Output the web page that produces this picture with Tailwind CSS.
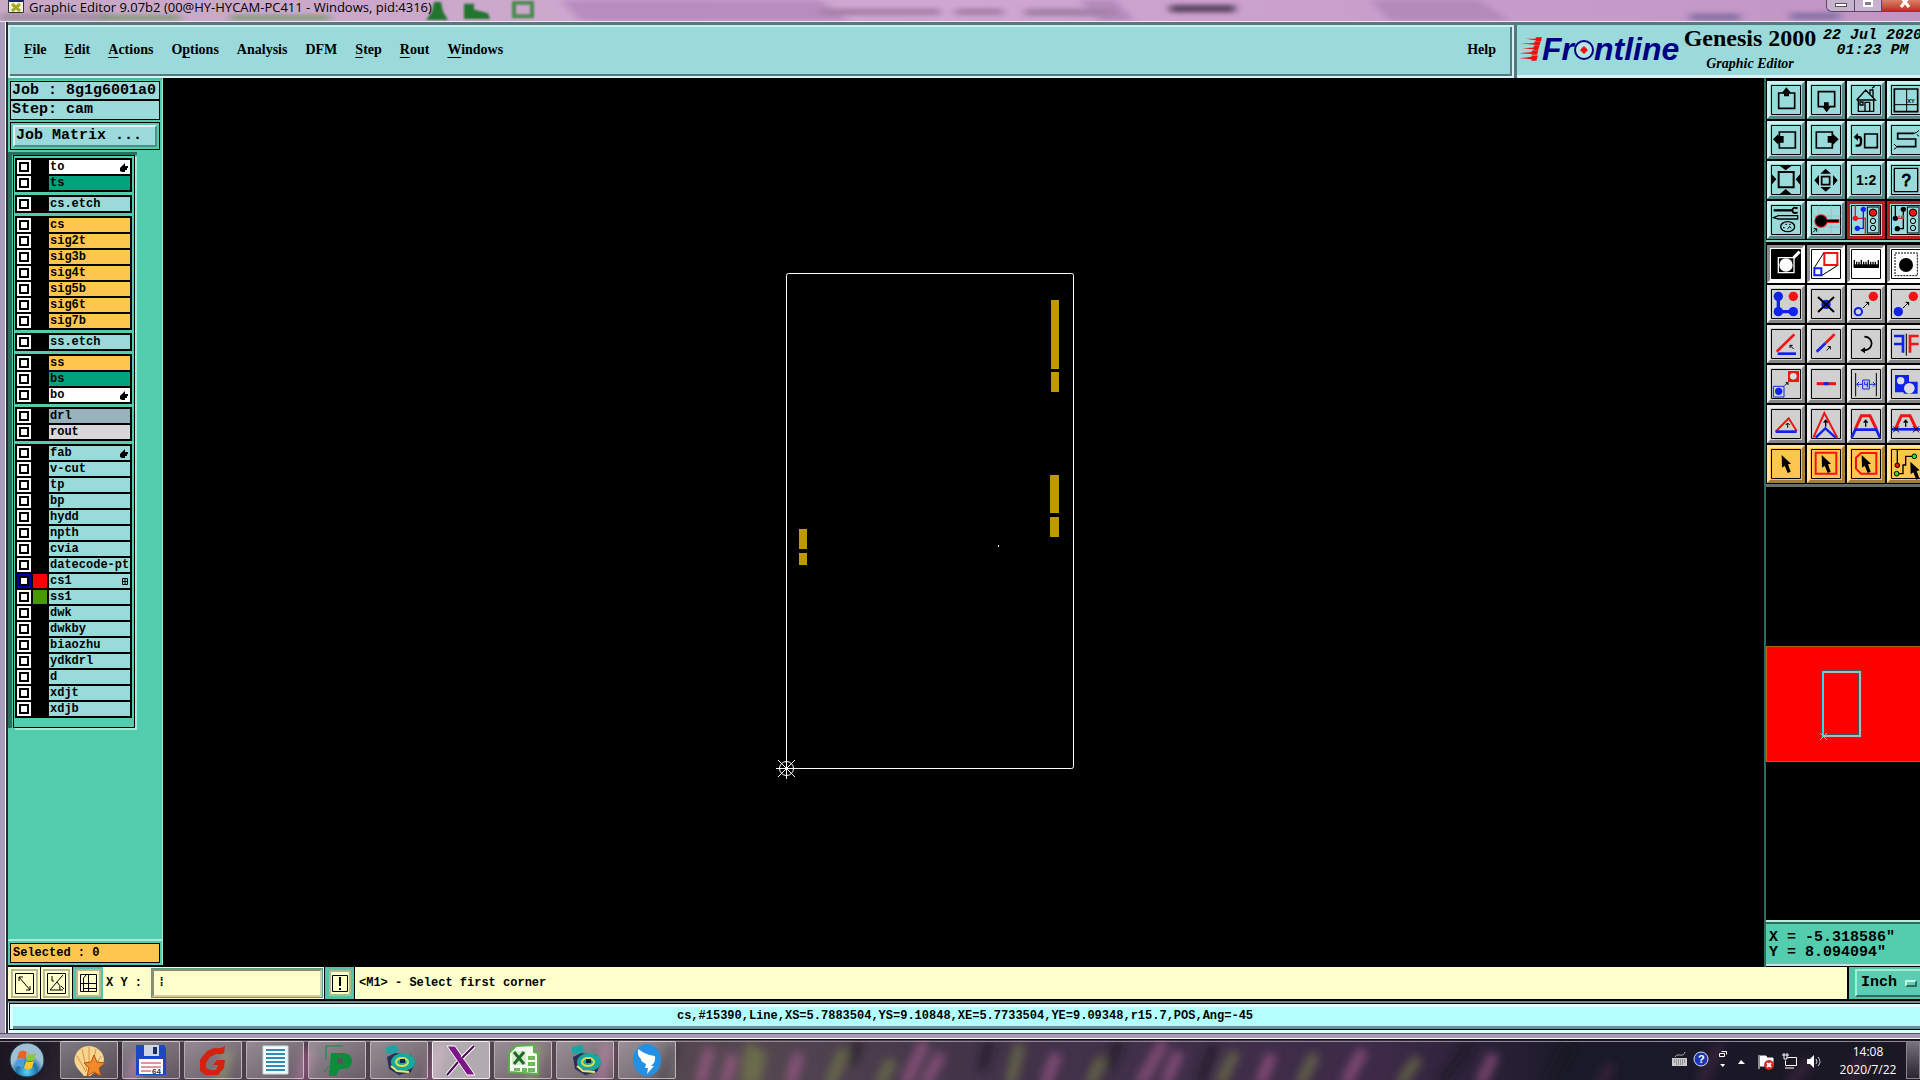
<!DOCTYPE html>
<html lang="en">
<head>
    <meta charset="UTF-8">
    <meta name="viewport" content="width=device-width, initial-scale=1.0">
    <title>Graphic Editor</title>
    <script src="https://cdn.jsdelivr.net/npm/@tailwindcss/browser@4"></script>
</head>
<body class="h-screen flex flex-col overflow-hidden bg-[#a79cba] text-black font-['Liberation_Mono',monospace]">

    <!-- Title bar -->
    <header class="relative h-[22px] shrink-0 overflow-hidden flex items-start justify-between bg-linear-to-r from-[#c9a9c6] via-[#cfa6d2] to-[#c194c4] border-b border-[#f0e4f2]">
        <svg class="absolute inset-0 w-full h-full" preserveAspectRatio="none" viewBox="0 0 1920 22" aria-hidden="true">
            <defs><filter id="soft"><feGaussianBlur stdDeviation="4 2"/></filter><filter id="softer"><feGaussianBlur stdDeviation="1"/></filter></defs>
            <g filter="url(#soft)">
                <path d="M0 14H110V22H0z" fill="#a38fa3"/>
                <path d="M560 0H820L850 22H580z" fill="#b98cc0"/>
                <path d="M1080 0H1115L1135 22H1100zM1370 0H1480L1510 22H1390z" fill="#b48abb"/>
                <path d="M820 9h120v7H820zM955 9h48v7h-48zM1025 9h90v8h-90z" fill="#a681a8"/>
                <path d="M1170 5h65v8h-65z" fill="#5f4665"/>
                <path d="M1690 14h50v8h-50zM1790 13h50v8h-50z" fill="#8a74a8"/>
                <path d="M100 16h80v5h-80zM230 16h100v5h-100z" fill="#7c9a76"/>
            </g>
            <g fill="#23752d" filter="url(#softer)">
                <path d="M434 2h7l2 10 5 9h-22l6-9z"/>
                <path d="M464 4h10v6l14 4 2 6h-26z"/>
                <path d="M514 3h18v14h-18z" fill="none" stroke="#4b8a50" stroke-width="4"/>
            </g>
        </svg>
        <div class="relative flex items-center h-[14px] pl-2 gap-[5px]">
            <svg class="w-4 h-4" viewBox="0 0 16 16" aria-hidden="true"><path d="M0 0h16v14H0z" fill="#f2f2e0"/><path d="M0 0h16v3H0z" fill="#14245c"/><path d="M4 5l8 7M12 5l-8 7" stroke="#a2ab22" stroke-width="3"/><path d="M.5 0v13.500h15V0" fill="none" stroke="#333"/></svg>
            <h1 class="text-[13px] leading-[16px] font-['Open_Sans','Noto_Sans',sans-serif]">Graphic Editor 9.07b2 (00@HY-HYCAM-PC411 - Windows, pid:4316)</h1>
        </div>
        <div class="relative flex h-[12px] w-[94px] shrink-0 border-l border-b border-[#594766] rounded-bl-md overflow-hidden">
            <button aria-label="Minimize" class="w-[28px] shrink-0 border-r border-[#594766] bg-[#c7b3cf] flex justify-center items-start pt-[3px]"><span class="w-3 h-1 bg-white border border-[#555]"></span></button>
            <button aria-label="Restore" class="w-[27px] shrink-0 border-r border-[#594766] bg-[#c7b3cf] flex justify-center items-start"><span class="w-[10px] h-[7px] bg-[#8c7a96] border-2 border-white"></span></button>
            <button aria-label="Close" class="w-[46px] shrink-0 bg-linear-to-b from-[#d97f6c] to-[#bb2d16] flex justify-center"><svg class="w-3 h-2" viewBox="0 0 12 8"><path d="M2-3l8 10M10-3L2 7" stroke="#fff" stroke-width="3"/></svg></button>
        </div>
    </header>

    <!-- Application window -->
    <div class="flex-1 min-h-0 flex flex-col ml-[5px] pl-[2px] border-l border-white bg-[#2a2a35]">

        <div class="h-[56px] shrink-0 flex bg-[#9bdada]">
            <nav class="flex-1 flex items-center gap-[18px] pl-[12px] pr-[18px] pb-[3px] border-t-[3px] border-[#55797d] text-[14px] leading-4 font-bold font-['Liberation_Serif',serif] shadow-[inset_2px_2px_0_#cdeeee,inset_-2px_-2px_0_#d6f2f2,inset_-4px_-4px_0_#55797d]">
                <a href="#" class="ml-1"><u class="underline-offset-3">F</u>ile</a>
                <a href="#"><u class="underline-offset-3">E</u>dit</a>
                <a href="#"><u class="underline-offset-3">A</u>ctions</a>
                <a href="#">O<u class="underline-offset-3">p</u>tions</a>
                <a href="#">Analysis</a>
                <a href="#">DFM</a>
                <a href="#"><u class="underline-offset-3">S</u>tep</a>
                <a href="#"><u class="underline-offset-3">R</u>out</a>
                <a href="#"><u class="underline-offset-3">W</u>indows</a>
                <a href="#" class="ml-auto">Help</a>
            </nav>
            <div class="w-[406px] shrink-0 flex overflow-hidden border-t-[3px] border-l-[3px] border-[#55797d] shadow-[inset_0_-3px_0_#d6f2f2]">
                <div class="flex items-center h-[48px] w-[165px] shrink-0 pl-[2px] text-[#000082] text-[32px] leading-8 font-bold italic font-['Liberation_Sans',sans-serif]">
                    <svg class="w-[23px] h-[24px] shrink-0" viewBox="0 0 66 69" aria-hidden="true"><path d="M18 5L48 5V1H66L63 12H48V9zM6 19L44 17V13H62L59 25H44V22zM9 33L42 30V26H58L55 38H42V35zM1 47L37 43V39H55L52 51H37V49zM1 61L36 57V53H54L50 68H36V64z" fill="#f00d0d"/></svg>
                    <span>Fr</span><svg class="w-5 h-6 shrink-0" viewBox="0 0 20 24" aria-hidden="true"><circle cx="10" cy="13" r="9" fill="#b5e4e6" stroke="#000082" stroke-width="2"/><path d="M10 9l4 4-4 4-4-4z" fill="#f00d0d"/></svg><span>ntline</span>
                </div>
                <div class="w-[136px] shrink-0 flex flex-col items-center pt-px font-bold font-['Liberation_Serif',serif] whitespace-nowrap">
                    <span class="text-[24px] leading-[24px]">Genesis 2000</span>
                    <span class="text-[14px] leading-4 italic pt-[6px] pb-px">Graphic Editor</span>
                </div>
                <div class="shrink-0 w-[105px] pl-1 pt-[3px] text-[15px] leading-[15px] font-bold italic whitespace-pre text-center">22 Jul 2020
01:23 PM</div>
            </div>
        </div>

        <div class="flex-1 min-h-0 flex bg-black">
            <!-- Layers -->
            <aside class="w-[155px] mb-[2px] shrink-0 flex flex-col bg-[#53cdad] border-r border-[#a5ecd8] border-t-[2px] border-t-[#55b59c]">
                <div class="mx-[2px] mt-px border border-black bg-[#9bdada] text-[15px] font-bold leading-[18px] whitespace-nowrap">
                    <p class="h-[19px] border-b-2 border-black pl-px">Job : 8g1g6001a0</p>
                    <p class="h-[18px] pl-px">Step: cam</p>
                </div>
                <div class="mx-[2px] mt-[2px] border border-black p-[2px]">
                    <button class="block w-full h-[22px] px-[1px] text-left text-[15px] leading-4 font-bold bg-[#9bdada] border-2 border-t-[#d9f7f4] border-l-[#d9f7f4] border-r-[#4c8f8c] border-b-[#4c8f8c]">Job Matrix ...</button>
                </div>
                <div class="mt-[2px] w-[129px] border-t-[3px] border-l-[4px] border-[#2b6e5d]">
                    <div id="layers" class="flex flex-col gap-[3px] border border-black shadow-[2px_2px_0_#a5ecd8] pt-[2px] pl-px pr-[2px] pb-[9px] ml-[1px] mr-[2px]"></div>
                </div>
                <p class="mt-auto border-t-2 border-[#a5ecd8] p-[2px] text-[12px] leading-[18px] font-bold"><span class="block h-5 border border-black bg-[#ffc64f] pl-[2px]">Selected : 0</span></p>
            </aside>

            <!-- Drawing area -->
            <main class="flex-1 min-w-0">
                <svg class="block w-full h-full" viewBox="163 78 1601 889" role="img" aria-label="Board outline">
                    <rect x="786.500" y="273.500" width="287" height="495" rx="2" fill="none" stroke="#fff"/>
                    <path d="M1051 300h8v69h-8zM1051 372h8v20h-8zM1050 475h9v38h-9zM1050 517h9v20h-9zM799 529h8v20h-8zM799 553h8v12h-8z" fill="#bf9900"/>
                    <path d="M998 545h1v2h-1z" fill="#fff"/>
                    <path d="M776 768.500h20M786.500 758v21M778 760l17 17M795 760l-17 17" stroke="#fff"/>
                    <circle cx="786.500" cy="768.500" r="7" fill="none" stroke="#fff"/>
                </svg>
            </main>

            <!-- Tools, overview and coordinates -->
            <aside class="w-[156px] shrink-0 flex flex-col overflow-hidden border-l-2 border-[#2f6b5e]">
                <div id="view-tools" class="grid grid-cols-[repeat(4,38px)] gap-[2px] pl-px pt-px mt-[2px] pb-[1px] border-b-2 border-[#8fd0c4]"></div>
                <div id="edit-tools" class="grid grid-cols-[repeat(4,38px)] gap-[2px] pl-px pt-[3px] pb-[1px] border-b-3 border-[#66706e]"></div>
                <div class="flex-1 min-h-0 flex flex-col justify-center">
                    <svg class="block h-[116px] w-[154px]" viewBox="0 0 154 116" role="img" aria-label="Overview">
                        <path d="M0 0h154v116H0z" fill="#fe0000"/>
                        <path d="M154 .5H.5v115H154" fill="none" stroke="#b06a10"/>
                        <path d="M57 26h37v64H57" fill="none" stroke="#3c5a5c" stroke-width="4"/>
                        <path d="M57 26h37v64H57" fill="none" stroke="#b5b5b5" stroke-width="2"/>
                        <path d="M57 25v66" stroke="#2de0e0" stroke-width="2"/>
                        <path d="M54 87l7 7M61 87l-7 7" stroke="#8cc"/>
                    </svg>
                </div>
                <div class="h-[46px] mb-px shrink-0 -ml-px bg-[#53cdad] border-t-2 border-b-2 border-[#b5ecdc] pl-[4px] text-[15px] leading-[15px] font-bold whitespace-pre pt-[8px] shadow-[inset_0_2px_0_#2b6e5d]">X = -5.318586"
Y = 8.094094"</div>
            </aside>
        </div>

        <!-- Command line -->
        <div class="h-[34px] shrink-0 flex bg-[#ffffcc] border-b-2 border-black text-[12px] font-bold">
            <button aria-label="Line mode" class="w-[33px] shrink-0 flex items-center justify-center border-r border-black">
                <svg class="w-[27px] h-[29px]" viewBox="0 0 27 29" fill="none" stroke="#000"><path d="M1 1h25v27H1z" stroke="#b8b890" stroke-width="2"/><path d="M4.500 4.500h18v20h-18z"/><path d="M8 8l11 13M8 12V8h4M19 17v4h-4"/></svg>
            </button>
            <button aria-label="Angle mode" class="w-[32px] shrink-0 flex items-center justify-center border-r border-black">
                <svg class="w-[27px] h-[29px]" viewBox="0 0 27 29" fill="none" stroke="#000"><path d="M1 1h25v27H1z" stroke="#b8b890" stroke-width="2"/><path d="M4.500 4.500h18v20h-18z"/><path d="M20 6L7 21h13M9 7v5h2M14 13q4 3 3 8M18 17l3 3"/></svg>
            </button>
            <button aria-label="Grid snap" class="w-[30px] shrink-0 flex items-center justify-center bg-[#53c4a6]">
                <svg class="w-[25px] h-[28px]" viewBox="0 0 25 28" fill="none" stroke="#000"><path d="M1 1h23v26H1z" fill="#ffffcc" stroke="#b8b890" stroke-width="2"/><path d="M4.500 5.500h16v17h-16zM12.500 5v17M4 14.500h16M7.500 22v-13l3-3.500M7 19.500h13"/></svg>
            </button>
            <label for="xy" class="w-[49px] shrink-0 pl-[3px] leading-[33px] whitespace-pre">X Y :</label>
            <input id="xy" type="text" class="w-[170px] shrink-0 my-[2px] px-1 bg-[#ffffcc] border-2 border-[#8e8e70] border-r-[#cfcfa5] border-b-[#cfcfa5] outline outline-[#4f9f88] placeholder:text-black" placeholder="⁞">
            <button aria-label="Alert" class="ml-[2px] w-[31px] shrink-0 flex items-center justify-center bg-[#53c4a6] border-x border-black">
                <svg class="w-[22px] h-[26px]" viewBox="0 0 22 26"><path d="M1 1h20v24H1z" fill="#ffffcc" stroke="#b8b890" stroke-width="2"/><path d="M3.500 5.500h15v16h-15z" fill="none" stroke="#000"/><path d="M10 7h2v9h-2zM10 18h2v2h-2z"/></svg>
            </button>
            <p class="flex-1 pl-1 leading-[33px] whitespace-pre">&lt;M1&gt; - Select first corner</p>
            <div class="w-[73px] shrink-0 border-l-2 border-black bg-[#53c4a6] pl-[6px] py-[2px] overflow-hidden">
                <button class="w-[80px] h-[28px] flex items-center gap-2 pl-[4px] bg-[#5ccdb2] border-2 border-t-[#a5ecd8] border-l-[#a5ecd8] border-b-[#2b6e5d] text-[15px] leading-4">Inch<span class="w-3 h-[7px] border-2 border-t-[#c5f5e8] border-l-[#c5f5e8] border-r-[#2b6e5d] border-b-[#2b6e5d]"></span></button>
            </div>
        </div>

        <!-- Status -->
        <div class="h-[32px] shrink-0 bg-[#dffcfc] border-t-2 border-[#6f8f8f] pb-[3px] pl-px">
            <p class="h-[27px] border border-r-0 border-black bg-[#b3ffff] text-center text-[12px] leading-[25px] font-bold shadow-[inset_0_3px_0_#dcffff,inset_3px_0_0_#dcffff,inset_0_-3px_0_#5d9797]">cs,#15390,Line,XS=5.7883504,YS=9.10848,XE=5.7733504,YE=9.09348,r15.7,POS,Ang=-45</p>
        </div>
    </div>
    <div class="h-[6px] shrink-0 border-t border-[#555] border-b border-b-white bg-[#a79cba]"></div>

    <!-- Taskbar -->
    <footer class="relative h-[41px] shrink-0 flex items-center bg-[#1b1822] border-t border-[#100c16]">
        <svg class="absolute inset-0 w-full h-full" preserveAspectRatio="none" viewBox="0 0 1920 40" aria-hidden="true">
            <defs>
                <filter id="haze"><feGaussianBlur stdDeviation="5"/></filter>
                <linearGradient id="ground"><stop offset="0" stop-color="#1c1620"/><stop offset=".1" stop-color="#4c3d4b"/><stop offset=".3" stop-color="#55464f"/><stop offset=".4" stop-color="#534650"/><stop offset=".5" stop-color="#43344a"/><stop offset=".72" stop-color="#3d2a48"/><stop offset=".82" stop-color="#1a1a29"/><stop offset="1" stop-color="#1b1724"/></linearGradient>
            </defs>
            <path d="M0 0h1920v40H0z" fill="url(#ground)"/>
            <g filter="url(#haze)" stroke-width="11" opacity=".55">
                <path d="M130 44l10-30M300 44l9-34M430 44l10-40M600 44l8-40M700 44l10-36M725 44l8-30M790 44l9-30M905 44l20-42M925 44l16-30M1045 44l12-30M1140 44l24-42M1165 44l14-32M1260 44l12-30M1345 44l18-34M1480 44l14-30" stroke="#b8649c"/>
                <path d="M220 44l8-34M530 44l8-40M745 44l6-40M755 44l6-34M830 44l14-34M880 44l12-24M1010 44l10-40M1090 44l12-26M1220 44l15-32M1300 44l15-30M1400 44l18-26" stroke="#7e8b48"/>
                <path d="M20 44l30-40M660 44l12-40M860 0l-10 24M990 0l-8 30M1120 0l-12 30M1200 44l14-40M1440 44l30-40M1550 44l20-40" stroke="#15121e"/>
                <path d="M1600 44l12-20M1700 44l20-40M1790 44l20-24M1850 44l14-30" stroke="#4a2948"/>
            </g>
            <path d="M0 1.500h1920" stroke="#8e8794"/>
        </svg>
        <button aria-label="Start" class="relative w-9 h-9 ml-[9px] mr-[15px] shrink-0">
            <svg viewBox="0 0 36 36"><defs><radialGradient id="orb" cy=".85"><stop offset="0" stop-color="#5fd4f5"/><stop offset=".6" stop-color="#1d6fa5"/><stop offset="1" stop-color="#9ec0d2"/></radialGradient></defs><circle cx="18" cy="18" r="17" fill="url(#orb)" stroke="#16384f"/><path d="M10 10q4-3 8 0l-2 7q-4-2-8 0z" fill="#e8622a"/><path d="M19 11q4 3 8 0l-2 7q-4 2-8 0z" fill="#8fc640"/><path d="M8 18q4-2 8 0l-2 8q-4-3-8-1z" fill="#4f9be0"/><path d="M17 19q4 2 8 0l-2 7q-4 3-8 0z" fill="#fbc52c"/></svg>
        </button>
        <div id="tasks" class="relative flex gap-1 h-[38px]"></div>
        <div class="relative ml-auto flex items-center h-full text-white">
            <svg class="w-[155px] h-5 mr-3" viewBox="0 0 155 20" aria-label="Notification area">
                <path d="M1 8h15v8H1z" fill="#ccc"/><path d="M3 10h11M3 12h11M5 14h7" stroke="#555" stroke-dasharray="1 1"/><path d="M4 7q1-3 5-2t5-3" fill="none" stroke="#aaa"/>
                <circle cx="30" cy="9" r="7" fill="#1c35b5" stroke="#dde" stroke-width="1"/><text x="27" y="13" font-family="Liberation Sans" font-weight="bold" font-size="11" fill="#fff">?</text>
                <path d="M50.500 1.500h5v3M48.500 3.500h5v3h-5z" fill="none" stroke="#fff"/><path d="M49 14h5l-2 3zM67 14h7l-4-4z" fill="#fff"/>
                <path d="M88 5v14M89 6h6l1 2h6v8H89" fill="#fff" stroke="#fff"/><circle cx="98" cy="15" r="5" fill="#d62b1f"/><path d="M96 13l4 4M100 13l-4 4" stroke="#fff" stroke-width="2"/>
                <path d="M116.500 7.500h9v8h-11v-5M111 5h7M113 3v6h3V3M114 18h9" fill="none" stroke="#fff" stroke-width="1"/>
                <path d="M136 9h3l4-4v13l-4-4h-3z" fill="#fff"/><path d="M145 9q2 3 0 5M147 7q4 5 0 9" fill="none" stroke="#ccc"/>
            </svg>
            <div class="w-[60px] mr-[8px] pt-[2px] text-center text-[12px] leading-[18px] font-['Open_Sans','Noto_Sans',sans-serif]"><p>14:08</p><p>2020/7/22</p></div>
            <button aria-label="Show desktop" class="w-[14px] h-[38px] border border-[#8b8390] bg-linear-to-b from-[#77727c] to-[#2a2530]"></button>
        </div>
    </footer>

    <script>
        const cyan = 'bg-[#9bdada]', orange = 'bg-[#ffc64f]', green = 'bg-[#00a37b]', white = 'bg-white';
        const groups = [
            [['to', white, 'hand'], ['ts', green]],
            [['cs.etch', cyan]],
            [['cs', orange], ['sig2t', orange], ['sig3b', orange], ['sig4t', orange], ['sig5b', orange], ['sig6t', orange], ['sig7b', orange]],
            [['ss.etch', cyan]],
            [['ss', orange], ['bs', green], ['bo', white, 'hand']],
            [['drl', 'bg-[#97b2bd]'], ['rout', 'bg-[#d9d7d9]']],
            [['fab', cyan, 'hand'], ['v-cut', cyan], ['tp', cyan], ['bp', cyan], ['hydd', cyan], ['npth', cyan], ['cvia', cyan],
             ['datecode-ptc', cyan], ['cs1', cyan, 'grid', 'bg-[#fe0000]'], ['ss1', cyan, '', 'bg-[#469b00]'], ['dwk', cyan], ['dwkby', cyan],
             ['biaozhu', cyan], ['ydkdrl', cyan], ['d', cyan], ['xdjt', cyan], ['xdjb', cyan]],
        ];
        const marks = {
            hand: '<svg class="w-2 h-[9px] shrink-0" viewBox="0 0 8 9"><path d="M0 5l2-2 3-3v3h3v2H7v2H5v2H2L0 8z"/></svg>',
            grid: '<svg class="w-[6px] h-[7px] shrink-0" viewBox="0 0 6 7"><path d="M.5.5h5v6h-5zM3 0v7M0 3.500h6" fill="none" stroke="#000"/></svg>',
        };
        document.getElementById('layers').innerHTML = groups.map(rows => `
            <div class="flex flex-col gap-[2px] bg-black p-[2px]">${rows.map(([name, color, mark, swatch]) => `
                <label class="flex h-[14px] gap-[2px]">
                    <input type="checkbox" aria-label="${name}" class="appearance-none w-[14px] h-[14px] shrink-0 bg-white border-2 ${name === 'cs1' ? 'border-[#0000a8]' : 'border-white'} outline-2 outline-black -outline-offset-4">
                    <span class="w-[14px] shrink-0 ${swatch || ''}"></span>
                    <span class="flex-1 min-w-0 overflow-hidden flex items-center justify-between pl-px pr-[2px] text-[12px] leading-[14px] font-bold whitespace-nowrap ${color}">${name}${marks[mark] || ''}</span>
                </label>`).join('')}
            </div>`).join('');

        // Tool glyphs, three units to the pixel
        const red = '#f21313', blue = '#1022ee';
        const dot = (x, y, c, r = 14) => `<circle cx="${x}" cy="${y}" r="${r}" fill="${c}" stroke="none"/>`;
        const line = (d, c, w = 3) => `<path d="${d}" stroke="${c}" stroke-width="${w}"/>`;
        const solid = (d, c = '#000') => `<path d="${d}" fill="${c}" stroke="none"/>`;
        const lamp = '<rect x="61" y="18" width="35" height="78"/><circle cx="78" cy="35" r="11" fill="#f21313"/><circle cx="78" cy="60" r="8"/><circle cx="78" cy="81" r="8"/>';
        const arrow = 'M44 30L72 56 63 58 71 80 62 84 53 62 45 68Z';
        const viewTools = [
            ['Pan up', line('M35 36h48v46H35z', '#000', 5) + solid('M58 19L73 37H66V46H51V37H44Z')],
            ['Pan down', line('M34 32h49v45H34z', '#000', 5) + solid('M51 64h14v11h8L59 94 45 75h6z')],
            ['Home', line('M29 57L56 27 85 57H29M34 57V91H80V57M54 91V64h14V91M39 63h9v9h-9zM69 40V27h9v22M75 22l8-6', '#000', 4)],
            ['Zoom to XY', line('M22 24h70v68H22z', '#000', 5) + line('M59 24v68M22 71h70', '#000') + '<text x="61" y="67" font-size="17" font-weight="bold" fill="#000" stroke="none">XY</text>'],
            ['Pan left', line('M37 33h48v48H37z', '#000', 5) + solid('M18 55L34 39V45H50V65H34V71Z')],
            ['Pan right', line('M28 33h48v48H28z', '#000', 5) + solid('M62 45H78V39L95 55 78 71V65H62Z')],
            ['Previous view', line('M53 39h38v41H53z', '#000', 5) + line('M26 74H34Q42 74 42 64V56Q42 48 34 48H28', '#000', 7) + solid('M20 48L33 36V60Z')],
            ['Snake', line('M81 37H32V54H86V77H29', '#000', 5) + line('M81 37l8-3 7-6M89 40l7 6M29 77l-8-8M29 79l-8 6', '#000')],
            ['Zoom in', line('M35 33h45v46H35z', '#000', 6) + solid('M38 14H74L56 28ZM38 100H74L56 84ZM13 38L28 55 13 72ZM100 38L86 55 100 72Z')],
            ['Zoom out', line('M44 47h24v24H44z', '#000', 5) + solid('M56 23L72 38H40ZM56 92L72 78H40ZM22 58L36 42V74ZM92 58L78 42V74Z')],
            ['Scale 1:2', '<text x="27" y="73" font-size="42" font-weight="bold" fill="#000" stroke="none">1:2</text>'],
            ['Query', line('M22 22h70v70H22z', '#000', 4) + '<text x="44" y="76" font-size="48" fill="#000">?</text>'],
            ['Setup', line('M20 28H76', '#000', 7) + line('M92 22Q78 16 76 28Q78 40 92 34', '#000', 6) + line('M20 50L34 44H92V54H34Z', '#000', 4) + '<ellipse cx="62" cy="77" rx="21" ry="15" stroke-width="4"/>' + line('M48 80h5M55 70h5M66 70h5M62 84l6-8 5 6', '#000')],
            ['Snap', line('M35 12v88M72 12v88M13 45h88M13 78h88', '#b5a9b4', 2) + dot(42, 60, red, 20) + line('M50 60H97', red, 12) + dot(42, 60, '#000', 17) + line('M50 60H95', '#000', 6) + line('M18 94l10-10M20 83h9v9', '#000')],
            ['Net on', line('M25 12v40h30v48', red, 4) + line('M49 25V82H31', blue, 4) + dot(25, 52, red, 8) + dot(49, 25, blue, 8) + dot(31, 82, blue, 8) + lamp],
            ['Net off', line('M25 12v40M49 25V83H31', '#000', 4) + line('M33 52h18M36 44v8M43 44v8M50 42v12', red) + dot(25, 52, '#000', 8) + dot(49, 25, '#000', 8) + dot(31, 83, '#000', 8) + lamp],
        ];
        const trap = 'M25 72L43 32H69L88 72';
        const up = line('M56 65V47M50 53l6-7 6 7', '#000', 4);
        const editTools = [
            ['Negative', solid('M14 14h88v86H14z') + line('M34 38h47v45H34z', '#fff', 4) + dot(57, 60, '#fff', 20) + line('M80 38L98 20', '#fff', 9)],
            ['Resize', line('M52 24h39v36H52z', red, 6) + line('M22 70h21v21H22z', blue, 6) + line('M22 68L50 24M45 91L91 62', '#000', 3)],
            ['Measure', solid('M20 58H96V69H20Z') + line('M22 45v20M29 50v12M36 50v12M43 45v20M50 50v12M57 50v12M64 45v20M71 50v12M78 50v12M85 50v12M94 45v20', '#000', 4)],
            ['Select area', '<path d="M24 24h67v68H24z" stroke-dasharray="6 3"/>' + dot(57, 60, '#000', 21)],
            ['Copy', line('M34 34V80H79', blue, 10) + dot(34, 34, blue) + dot(34, 80, blue) + dot(79, 80, blue) + dot(79, 34, red)],
            ['Delete', dot(57, 58, blue) + line('M33 36L81 81M81 36L33 81', '#000', 6)],
            ['Copy to', dot(79, 34, red) + '<circle cx="34" cy="80" r="11" stroke="#1022ee" stroke-width="6"/>' + line('M48 69L65 52M56 52h9v9', '#000')],
            ['Move to', dot(79, 34, red) + dot(34, 80, blue) + line('M48 69L65 52M56 52h9v9', '#000')],
            ['Rotate', line('M29 80L82 28', red, 8) + line('M32 86H87', blue, 8) + line('M80 72L69 61M69 69v-8h8', '#000')],
            ['Stretch', line('M55 55L83 28', red, 8) + line('M29 80L55 55', blue, 8) + line('M59 76L70 65M62 65h8v8', '#000')],
            ['Undo', line('M52 35Q72 36 74 55Q72 76 48 76', '#000', 5) + solid('M40 76L54 67V85Z')],
            ['Mirror', line('M21 33H48V83M21 57H48', blue, 8) + line('M95 33H69V83M95 57H69', red, 8) + line('M58 26V92', '#000')],
            ['Change symbol', solid('M63 18h33v33H63z', red) + dot(79, 34, '#ddd', 10) + line('M19 64h32v32H19z', blue) + dot(35, 79, blue, 11) + line('M53 62L62 53M56 53h7v7', '#000')],
            ['Break', line('M29 56H87', red, 9) + line('M50 56H65', blue, 9)],
            ['Spacing', line('M26 24V94M88 24V94', '#000') + line('M29 58H47M67 58H85M36 51l-7 7 7 7M78 51l7 7-7 7M47 45h20v27H47zM53 50v9h8M61 50v17', blue)],
            ['Merge', solid('M24 30H66V50H92V86H50V82H24z', blue) + dot(41, 47, '#ddd', 11) + dot(67, 70, '#ddd', 16)],
            ['Triangle', line('M26 80L65 40 89 78', red, 6) + line('M26 80H89', blue, 8) + line('M62 68V55M56 60l6-6 6 6', '#000')],
            ['Peak', line('M19 98L52 24 91 98', red, 6) + line('M26 98L55 70 86 98', blue, 7) + up],
            ['Plateau', line(trap, red, 9) + line('M14 98L25 74H88L99 98', blue, 8) + up],
            ['Plateau cut', line(trap, red, 9) + line('M14 73H100', blue, 8) + line('M18 64l18 18M36 64L18 82M78 64l18 18M96 64L78 82', '#000') + up],
            ['Select', solid(arrow)],
            ['Select in box', line('M26 23h62v63H26z', red, 6) + solid(arrow)],
            ['Select in polygon', line('M42 24H88V86H42L27 71V38Z', red, 6) + solid(arrow)],
            ['Select net', line('M31 14v44M82 34H56V60H48V86H29', '#000', 4) + '<circle cx="31" cy="61" r="7" fill="#f21313"/><circle cx="82" cy="34" r="7" fill="#2fe02f"/><circle cx="29" cy="86" r="7" fill="#2fe02f"/>' + '<g transform="translate(26 20)">' + solid(arrow) + '</g>'],
        ];
        const skins = {
            cyan: 'bg-[#9bdada] border-t-[#cdf2f0] border-l-[#cdf2f0] border-r-[#5b8788] border-b-[#5b8788]',
            alert: 'bg-[#9bdada] border-[#b51f1f]',
            white: 'bg-white border-t-[#8d8d8d] border-l-[#8d8d8d] border-r-white border-b-white',
            gray: 'bg-[#d0d0d0] border-t-[#ececec] border-l-[#ececec] border-r-[#858585] border-b-[#858585]',
            orange: 'bg-[#ffc64f] border-t-[#ffe3a3] border-l-[#ffe3a3] border-r-[#a57f33] border-b-[#a57f33]',
        };
        const tool = ([name, art], skin) => `<button aria-label="${name}" class="w-[38px] h-[38px] border-3 ${skins[skin]}"><svg class="block w-8 h-8" viewBox="9 9 96 96" fill="none" stroke="#000" stroke-width="3" font-family="Liberation Sans"><path d="M13.500 13.500h87v87h-87z"/>${art}</svg></button>`;
        document.getElementById('view-tools').innerHTML = viewTools.map((t, i) => tool(t, i > 13 ? 'alert' : 'cyan')).join('');
        document.getElementById('edit-tools').innerHTML = editTools.map((t, i) => tool(t, i < 4 ? 'white' : i > 19 ? 'orange' : 'gray')).join('');

        const disc = '<path d="M3 3l10-2 3 6-6 3-7-1z" fill="#1aa6a4"/><path d="M4 13l8-4 16 2 4 8-4 9-12 3-10-6z" fill="#2b2f55"/><ellipse cx="20" cy="18" rx="12" ry="9" fill="#19a89e"/><ellipse cx="19" cy="18" rx="6" ry="4" fill="none" stroke="#d9df4a" stroke-width="2"/><path d="M17 15h5v4h-5z" fill="#124"/><path d="M8 22l6 5 12 1" fill="none" stroke="#e6e870" stroke-width="2"/>';
        const tasks = [
            ['Shell', '<path d="M16 2q8 0 13 7 4 7 0 12l-8 8-4 3h-6l-6-7Q-1 17 3 10 7 2 16 2z" fill="#f7d590"/><path d="M16 3v24M9 5l5 22M23 5l-5 22M4 12l9 16M28 12l-9 16" stroke="#d5963c"/><path d="M21 11l3 7 8 1-6 5 2 8-7-4-7 4 2-8-5-5 7-1z" fill="#f28a2c" stroke="#b4540d"/>'],
            ['Floppy', '<path d="M1 1h28l2 3v27H1z" fill="#1d46c4"/><path d="M9 1h15v11H9z" fill="#cfd6e4"/><path d="M18 3h4v7h-4z" fill="#1a2b66"/><path d="M4 15h24v15H4z" fill="#fff"/><path d="M6 19h20M6 23h20M6 27h10" stroke="#c22a3a"/><text x="17" y="30" font-size="8" font-weight="bold" fill="#333">64</text>'],
            ['Editor', '<path d="M28 2L27 9Q25 11 19 10L13 13 9 19V24L14 26H19L21 21H16L20 16H28L27 24 21 31H8L3 27V16L10 7 17 4Q24 5 28 2z" fill="#d3220f"/>'],
            ['Notes', '<path d="M4 2h25v28H4z" fill="#f3fafd" stroke="#c9dde6"/><path d="M7 6h19M7 10h19M7 14h19M7 18h19M7 22h19M7 26h19" stroke="#2e8db5" stroke-width="2"/>'],
            ['Plot', '<path d="M10 9h13q8 1 8 8 0 8-9 8h-3l-4 7H8z" fill="#0c8d3c"/><path d="M17 14h5v6h-6z" fill="#5c5256"/><path d="M5 16V2H22M3 28l5-6" fill="none" stroke="#0c8d3c"/>'],
            ['Genesis', disc],
            ['X server', '<path d="M2 2h8l20 29h-8z" fill="#7d1789" stroke="#fff"/><path d="M29 2L17 14M13 18L2 31" stroke="#fff" stroke-width="4"/><path d="M29 2L17 14M13 18L2 31" stroke="#4b0a56" stroke-width="2"/>', 'bg-white/55 border-white/80'],
            ['Spreadsheet', '<path d="M9 2l18-1v7l4 1v21L2 28V9z" fill="#f4faf0" stroke="#5fae4c" stroke-width="2"/><path d="M5 7h14v14H5z" fill="#d6edcc"/><path d="M7 8l10 12M17 8L7 20" stroke="#20682a" stroke-width="3"/><path d="M21 12h7v4h-7zM21 18h7v4h-7zM7 24h6v3H7zM15 24h5v4h-5zM21 24h7v4h-7z" fill="#6fb65c"/>'],
            ['Genesis 2', disc],
            ['Messenger', '<ellipse cx="16" cy="16" rx="14" ry="16" fill="#2490e3"/><path d="M7 5q8 6 17 7 1 6-4 10h3l-7 8 1-6h-3l1-4q-6-3-5-5-4-3-3-10z" fill="#fff"/>'],
        ];
        document.getElementById('tasks').innerHTML = tasks.map(([name, art, look]) => `
            <button aria-label="${name}" class="w-[58px] h-[38px] flex items-center justify-center border rounded-xs ${look || 'bg-linear-to-br from-white/40 to-white/15 border-white/45'}"><svg class="w-8 h-8" viewBox="0 0 32 32" font-family="Liberation Sans">${art}</svg></button>`).join('');
    </script>
</body>
</html>
